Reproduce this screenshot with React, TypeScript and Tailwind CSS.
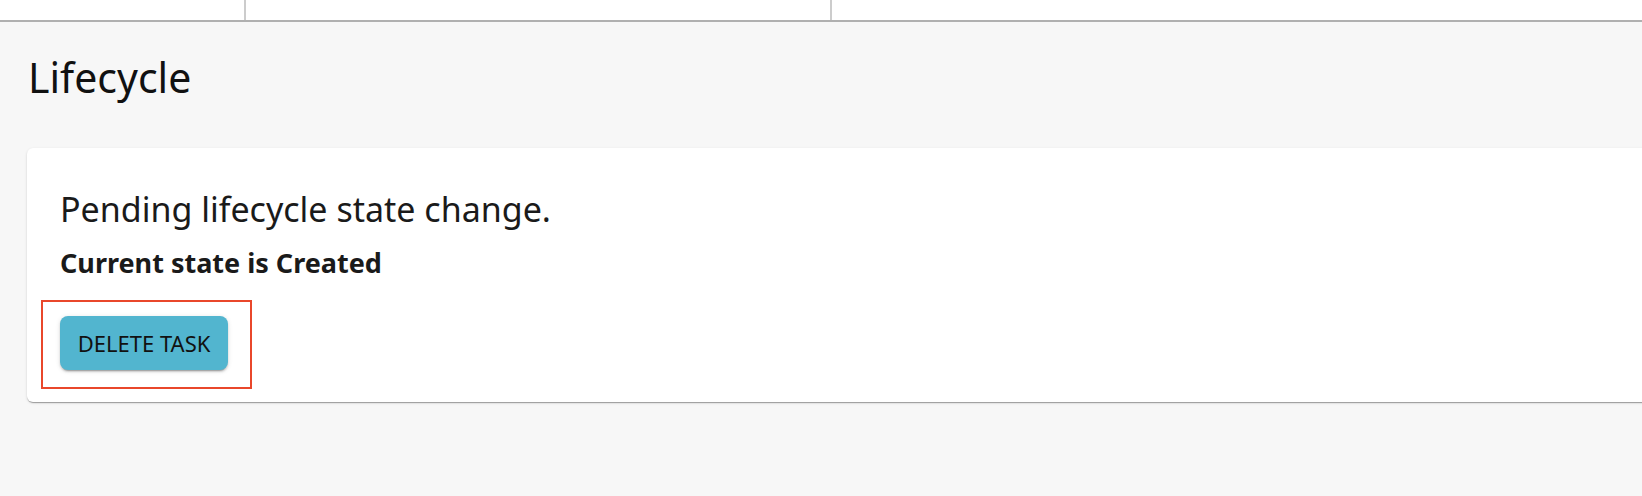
export default function App() {
  return (
    <div className="min-h-screen w-full overflow-hidden bg-[#f7f7f7] font-['Noto_Sans','Open_Sans',sans-serif] text-[#111]">
      {/* table header strip cut off at the top */}
      <div className="flex h-[22px] border-b-2 border-[#b0b0b0] bg-white">
        <div className="w-[246px] border-r-2 border-[#cccccc]" />
        <div className="w-[586px] border-r-2 border-[#cccccc]" />
        <div className="flex-1" />
      </div>

      <div className="pl-[27px]">
        <h1 className="mt-[31px] ml-[1px] text-[41px] leading-[48px] font-normal text-[#111]">Lifecycle</h1>

        <div className="mt-[47px] -mr-[40px] rounded-l-[6px] bg-white px-[33px] pt-[39px] pb-[32px] shadow-[0_2px_1px_-1px_rgba(0,0,0,0.2),0_1px_1px_0_rgba(0,0,0,0.14),0_1px_3px_0_rgba(0,0,0,0.12)]">
          <p className="text-[34px] leading-[44px] text-[#1a1a1a]">Pending lifecycle state change.</p>
          <p className="mt-[14px] text-[27px] leading-[36px] font-bold text-[#1a1a1a]">Current state is Created</p>

          <div className="relative mt-[35px] w-fit">
            <button className="h-[54px] w-[168px] rounded-[8px] bg-[#52b5cf] text-[22px] leading-none text-[#111] shadow-[0_3px_1px_-2px_rgba(0,0,0,0.2),0_2px_2px_0_rgba(0,0,0,0.14),0_1px_5px_0_rgba(0,0,0,0.12)]">
              DELETE TASK
            </button>
            {/* annotation box */}
            <div className="pointer-events-none absolute -top-[16px] -bottom-[19px] -left-[19px] -right-[24px] border-2 border-[#e9472b]" />
          </div>
        </div>
      </div>
    </div>
  )
}
